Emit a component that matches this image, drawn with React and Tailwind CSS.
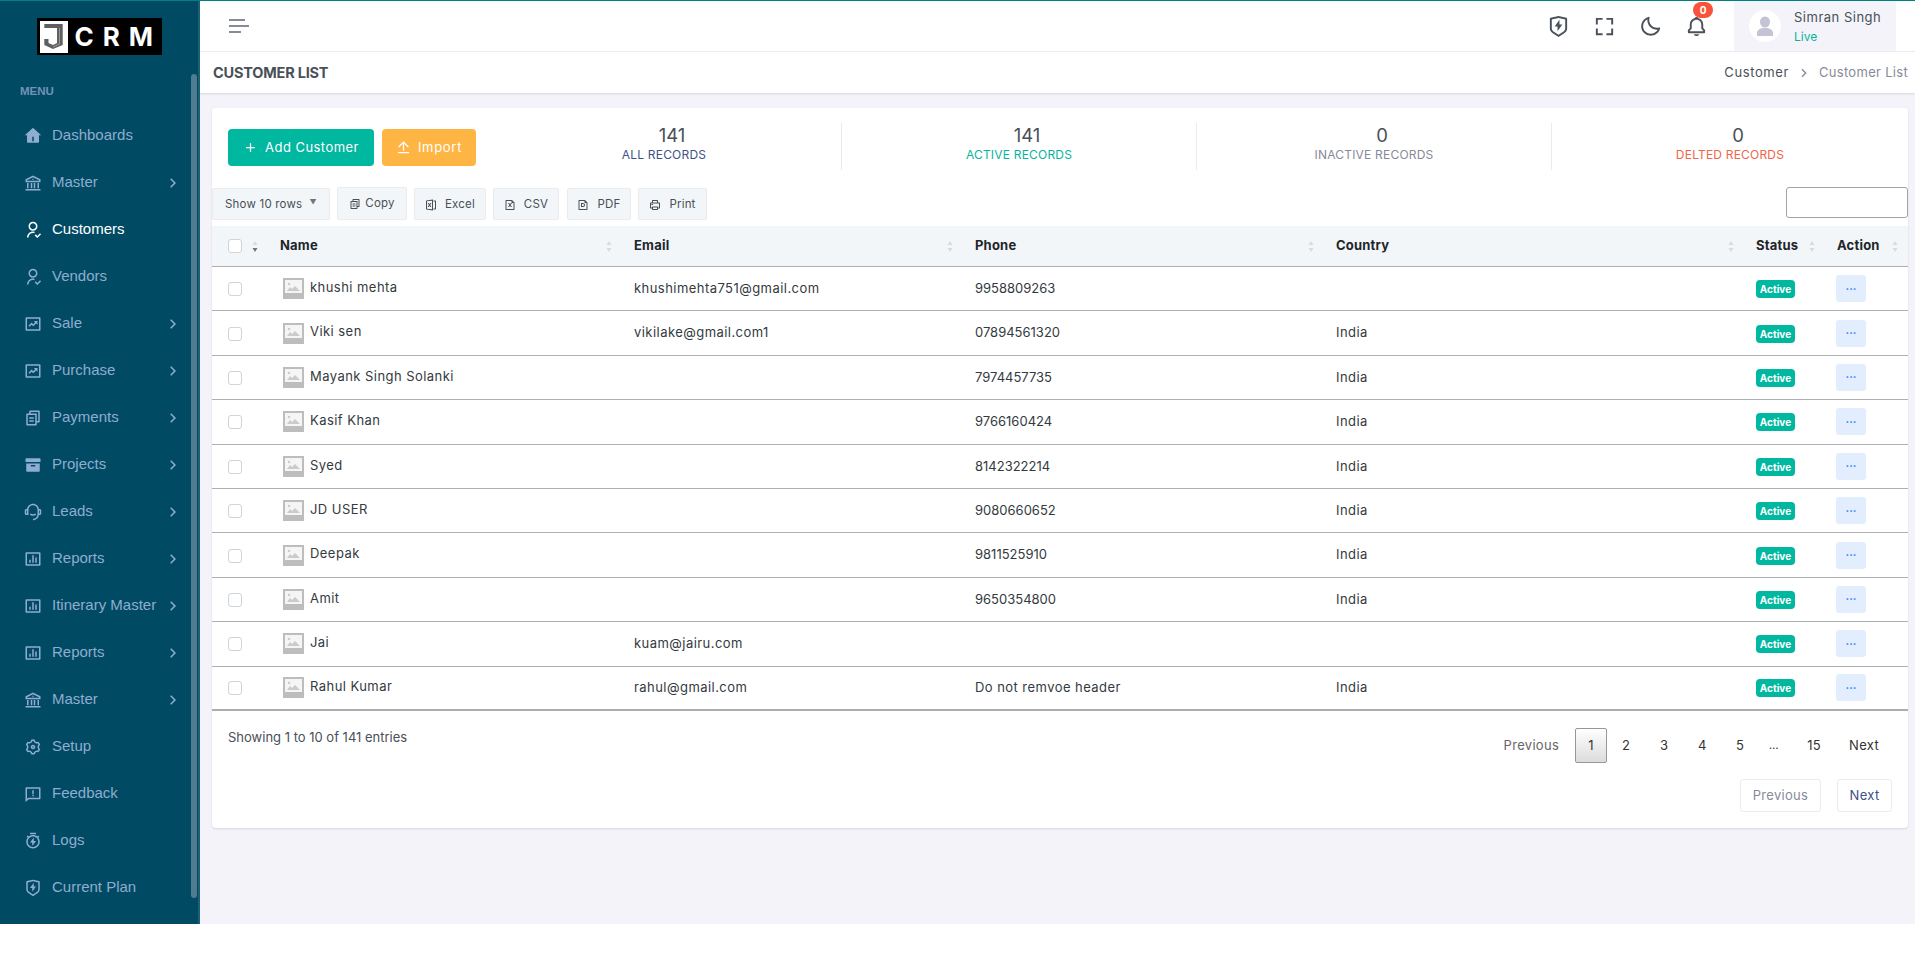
import {
  RiAddLine, RiArchiveFill, RiArrowRightSLine, RiBankLine, RiBarChartBoxLine, RiCustomerService2Line,
  RiFeedbackLine, RiFileCopy2Line, RiFileExcel2Line, RiFileExcelLine, RiFilePdfLine, RiFundsBoxLine,
  RiHome4Fill, RiPrinterLine, RiSettings3Line, RiShieldFlashLine, RiTimerFlashLine, RiUploadLine, RiUserFollowLine,
} from "react-icons/ri";
import { BiBell, BiFullscreen, BiMoon } from "react-icons/bi";

const sans = "[font-family:Inter,'Noto_Sans',sans-serif]";

const menu = [
  { label: "Dashboards", icon: RiHome4Fill },
  { label: "Master", icon: RiBankLine, more: true },
  { label: "Customers", icon: RiUserFollowLine, active: true },
  { label: "Vendors", icon: RiUserFollowLine },
  { label: "Sale", icon: RiFundsBoxLine, more: true },
  { label: "Purchase", icon: RiFundsBoxLine, more: true },
  { label: "Payments", icon: RiFileCopy2Line, more: true },
  { label: "Projects", icon: RiArchiveFill, more: true },
  { label: "Leads", icon: RiCustomerService2Line, more: true },
  { label: "Reports", icon: RiBarChartBoxLine, more: true },
  { label: "Itinerary Master", icon: RiBarChartBoxLine, more: true },
  { label: "Reports", icon: RiBarChartBoxLine, more: true },
  { label: "Master", icon: RiBankLine, more: true },
  { label: "Setup", icon: RiSettings3Line },
  { label: "Feedback", icon: RiFeedbackLine },
  { label: "Logs", icon: RiTimerFlashLine },
  { label: "Current Plan", icon: RiShieldFlashLine },
];

const rows = [
  { name: "khushi mehta", email: "khushimehta751@gmail.com", phone: "9958809263", country: "" },
  { name: "Viki sen", email: "vikilake@gmail.com1", phone: "07894561320", country: "India" },
  { name: "Mayank Singh Solanki", email: "", phone: "7974457735", country: "India" },
  { name: "Kasif Khan", email: "", phone: "9766160424", country: "India" },
  { name: "Syed", email: "", phone: "8142322214", country: "India" },
  { name: "JD USER", email: "", phone: "9080660652", country: "India" },
  { name: "Deepak", email: "", phone: "9811525910", country: "India" },
  { name: "Amit", email: "", phone: "9650354800", country: "India" },
  { name: "Jai", email: "kuam@jairu.com", phone: "", country: "" },
  { name: "Rahul Kumar", email: "rahul@gmail.com", phone: "Do not remvoe header", country: "India" },
];

const cols = "grid grid-cols-[56px_354px_341px_361px_420px_81px_83px]";

function Logo() {
  return (
    <div className="w-[125px] h-[37px] bg-black flex items-center pl-[3px]">
      <div className="w-[32px] h-[32px] bg-white flex items-center justify-center">
        <svg width="28" height="28" viewBox="0 0 28 28">
          <path d="M4.3 1H22.7V22L13 26L4.3 22V16H8.5V20L13 22L17 20V5H4.3Z" fill="#5f5f5f" />
          <path d="M19.5 5V21L13 24" fill="none" stroke="#a8a8a8" strokeWidth="0.8" />
        </svg>
      </div>
      <span className="ml-[6px] text-white text-[26px] leading-none font-bold tracking-[9px] [font-family:Inter,sans-serif]">
        CRM
      </span>
    </div>
  );
}

function Sidebar() {
  return (
    <aside className="relative w-[200px] shrink-0 bg-[#004a63] border-r-2 border-[#1c5f76] flex flex-col">
      <div className="h-[72px] pt-[17px] pl-[37px]">
        <Logo />
      </div>
      <div className="h-[39px] pl-[20px] pt-[11px] text-[11.5px] leading-[14px] font-bold text-[#7392b8] [font-family:'Liberation_Sans',Arial,sans-serif]">
        MENU
      </div>
      <nav className="flex flex-col [font-family:'Liberation_Sans',Arial,sans-serif]">
        {menu.map((item, i) => (
          <a
            key={i}
            className={`h-[47px] flex items-center pl-[24px] text-[15px] ${item.active ? "text-white" : "text-[#8fadd0]"}`}
          >
            <item.icon size={18} className="shrink-0 mr-[10px]" />
            <span className="whitespace-nowrap">{item.label}</span>
            {item.more && <RiArrowRightSLine size={18} className="absolute left-[164px]" />}
          </a>
        ))}
      </nav>
      <div className="absolute left-[191px] top-[73px] w-[6px] h-[824px] rounded bg-[#4f7c90]" />
    </aside>
  );
}

function Header() {
  return (
    <header className="h-[51px] bg-white border-b border-[#eceef1] flex items-center pl-[29px]">
      <button className="flex flex-col gap-[4px] w-[20px]">
        <span className="block h-[2px] w-[16px] bg-[#878a99]" />
        <span className="block h-[2px] w-[20px] bg-[#878a99]" />
        <span className="block h-[2px] w-[12px] bg-[#878a99]" />
      </button>
      <div className="ml-auto flex items-center text-[#495057] mr-[19px]">
        <RiShieldFlashLine size={23} className="mr-[23px]" />
        <BiFullscreen size={23} className="mr-[23px]" />
        <BiMoon size={23} className="mr-[23px]" />
        <div className="relative mr-[26px]">
          <BiBell size={23} />
          <span className="absolute -top-[13px] left-[8px] w-[20px] h-[16px] rounded-full bg-[#f8533a] text-white text-[10px] leading-[16px] text-center font-bold">
            0
          </span>
        </div>
        <div className="w-[162px] h-[50px] bg-[#f3f3f9] flex items-center pl-[15px]">
          <div className="w-[32px] h-[32px] rounded-full bg-white flex items-center justify-center">
            <svg width="18" height="20" viewBox="0 0 18 20" fill="#c3c3d5">
              <ellipse cx="9" cy="6" rx="5" ry="5.6" />
              <path d="M1 20v-3c0-3 3-5 8-5s8 2 8 5v3z" />
            </svg>
          </div>
          <div className="ml-[13px]">
            <div className="text-[13px] leading-[20px] tracking-[0.5px] text-[#495057]">Simran Singh</div>
            <div className="text-[12px] leading-[16px] mt-[2px] text-[#0ab39c]">Live</div>
          </div>
        </div>
      </div>
    </header>
  );
}

function TitleBar() {
  return (
    <div className="h-[41px] bg-white shadow-[0_1px_2px_rgba(56,65,74,0.15)] flex items-center justify-between pl-[13px] pr-[7px]">
      <h4 className="text-[14.5px] font-bold tracking-[-0.2px] text-[#495057]">CUSTOMER LIST</h4>
      <div className="flex items-center text-[13px] tracking-[0.3px]">
        <span className="text-[#495057] tracking-[0.6px]">Customer</span>
        <RiArrowRightSLine size={16} className="mx-[7px] text-[#878a99]" />
        <span className="text-[#878a99]">Customer List</span>
      </div>
    </div>
  );
}

function Stat({ value, label, color, className }) {
  return (
    <div className={`h-[47px] flex flex-col items-center ${className}`}>
      <div className="text-[18.5px] leading-[22px] mt-[1px] pl-[16px] text-[#495057]">{value}</div>
      <div className={`text-[12px] leading-[18px] tracking-[0.2px] ${color}`}>{label}</div>
    </div>
  );
}

function ToolButton({ icon: Icon, label, className, gap = "mr-[8px]" }) {
  return (
    <button className={`h-[32px] pt-[1px] bg-[#f3f6f9] border border-[#e9ebec] rounded-[2px] flex items-center justify-center text-[11.5px] tracking-[0.2px] text-[#495057] ${className}`}>
      <Icon size={12} className={gap} />
      {label}
    </button>
  );
}

function SortIcon({ className = "", sorted }) {
  return (
    <svg width="6" height="13" viewBox="0 0 6 13" className={className}>
      <path d="M3 1l2.5 4h-5z" fill="#d8dadd" />
      <path d="M3 12l2.5-4h-5z" fill={sorted ? "#70757b" : "#d8dadd"} />
    </svg>
  );
}

function Check() {
  return <span className="block w-[14px] h-[14px] bg-white border border-[#ced4da] rounded-[3px]" />;
}

function Thumb() {
  return (
    <svg width="21" height="21" viewBox="0 0 21 21" className="shrink-0">
      <rect width="21" height="21" fill="#bdbdbd" />
      <rect x="2" y="2" width="17" height="13" fill="#f5f5f5" />
      <path d="M4 13l3-4 2 2 3-3 2 2 3 3z" fill="#cbcbcb" />
      <circle cx="6" cy="6" r="1.2" fill="#cbcbcb" />
    </svg>
  );
}

function HeadCell({ label }) {
  return (
    <div className="flex items-center justify-between pl-[12px] pr-[10px]">
      <span className="font-bold text-[13px] tracking-[0.2px] text-[#212529]">{label}</span>
      <SortIcon />
    </div>
  );
}

function Table() {
  return (
    <div>
      <div className={`${cols} h-[41px] bg-[#f3f6f9] border-b border-[#adb0b3]`}>
        <div className="flex items-center pl-[16px]">
          <Check />
          <SortIcon className="ml-[10px]" sorted />
        </div>
        <HeadCell label="Name" />
        <HeadCell label="Email" />
        <HeadCell label="Phone" />
        <HeadCell label="Country" />
        <HeadCell label="Status" />
        <HeadCell label="Action" />
      </div>
      {rows.map((row, i) => (
        <div
          key={i}
          className={`${cols} h-[44.4px] items-center text-[13px] tracking-[0.45px] text-[#343a40] ${i === rows.length - 1 ? "border-b-2 border-[#adadad]" : "border-b border-[#adb0b3]"}`}
        >
          <div className="pl-[16px] pt-[1px]"><Check /></div>
          <div className="pl-[15px] flex items-center gap-[6px]">
            <Thumb />
            <span className="-mt-[2px]">{row.name}</span>
          </div>
          <div className="pl-[12px]">{row.email}</div>
          <div className={`pl-[12px] ${/^\d+$/.test(row.phone) ? "tracking-normal" : ""}`}>{row.phone}</div>
          <div className="pl-[12px]">{row.country}</div>
          <div className="pl-[12px] pt-[1px]">
            <span className="block w-[39px] h-[18px] rounded-[4px] bg-[#00b7a0] text-white text-[10px] font-bold leading-[18px] text-center tracking-normal">
              Active
            </span>
          </div>
          <div className="pl-[11px]">
            <button className="w-[30px] h-[27px] rounded-[3px] bg-[#e2eefd] text-[#2f80ff] text-[11px] leading-[20px] font-bold tracking-normal">
              ···
            </button>
          </div>
        </div>
      ))}
    </div>
  );
}

function Pagination() {
  return (
    <div className="flex items-center justify-end text-[13px] tracking-[0.3px] text-[#333] pr-[29px]">
      <span className="text-[#666] mr-[16px]">Previous</span>
      <span className="w-[32px] h-[35px] flex items-center justify-center border border-[#979797] rounded-[2px] bg-gradient-to-b from-white to-[#dcdcdc] mr-[15px]">1</span>
      {["2", "3", "4", "5"].map((n, i) => (
        <span key={n} className={`w-[8px] text-center ${i === 3 ? "mr-[25px]" : "mr-[30px]"}`}>{n}</span>
      ))}
      <span className="w-[8px] mr-[30px] text-center text-[11px]">…</span>
      <span className="w-[14px] mr-[28px] text-center">15</span>
      <span>Next</span>
    </div>
  );
}

export default function App() {
  return (
    <div className={`h-[955px] bg-white overflow-hidden ${sans}`}>
      <div className="h-[924px] flex border-t border-[#008080]">
        <Sidebar />
        <div className="flex-1 min-w-0 bg-[#f3f3f9] flex flex-col">
          <Header />
          <TitleBar />
          <main className="pt-[15px] pl-[12px] pr-[7px]">
            <div className="h-[720px] bg-white rounded-[4px] shadow-[0_1px_2px_rgba(56,65,74,0.15)]">
              <div className="flex items-start pt-[21px] h-[80px]">
                <button className="ml-[16px] w-[146px] h-[37px] bg-[#00b7a0] rounded-[4px] text-white text-[13px] tracking-[0.45px] flex items-center justify-center">
                  <RiAddLine size={15} className="mr-[7px]" />
                  Add Customer
                </button>
                <button className="ml-[8px] w-[94px] h-[37px] bg-[#ffb544] rounded-[4px] text-white text-[13px] tracking-[0.7px] flex items-center justify-center">
                  <RiUploadLine size={15} className="mr-[7px]" />
                  Import
                </button>
                <div className="flex flex-1 -mt-[6px] ml-[11px]">
                  <Stat value="141" label="ALL RECORDS" color="text-[#405189]" className="w-[355px] border-r border-[#e9ebec]" />
                  <Stat value="141" label="ACTIVE RECORDS" color="text-[#0ab39c]" className="w-[355px] border-r border-[#e9ebec]" />
                  <Stat value="0" label="INACTIVE RECORDS" color="text-[#878a99]" className="w-[355px] border-r border-[#e9ebec]" />
                  <Stat value="0" label="DELTED RECORDS" color="text-[#f06548]" className="flex-1" />
                </div>
              </div>
              <div className="h-[38px] flex items-start">
                <button className="h-[32px] pt-[1px] w-[118px] bg-[#f3f6f9] border border-[#e9ebec] rounded-[2px] flex items-center pl-[12px] text-[11.5px] tracking-[0.2px] text-[#495057]">
                  Show 10 rows
                  <span className="ml-[7px] -mt-[3px] text-[7px] text-[#70757b]">▼</span>
                </button>
                <ToolButton icon={RiFileCopy2Line} label="Copy" gap="mr-[4px]" className="ml-[7px] w-[70px] !h-[33px] -mt-[1px]" />
                <ToolButton icon={RiFileExcel2Line} label="Excel" className="ml-[7px] w-[72px]" />
                <ToolButton icon={RiFileExcelLine} label="CSV" className="ml-[7px] w-[66px]" />
                <ToolButton icon={RiFilePdfLine} label="PDF" className="ml-[8px] w-[64px]" />
                <ToolButton icon={RiPrinterLine} label="Print" className="ml-[7px] w-[69px]" />
                <input className="ml-auto -mt-[1px] w-[122px] h-[31px] bg-white border border-[#a3a3a3] rounded-[3px]" />
              </div>
              <Table />
              <div className="flex items-start">
                <div className="pl-[16px] pt-[17px] text-[13px] text-[#495057] whitespace-nowrap">
                  Showing 1 to 10 of 141 entries
                </div>
                <div className="flex-1 pt-[17px]">
                  <Pagination />
                  <div className="flex justify-end mt-[16px] pr-[16px] text-[13px] tracking-[0.3px]">
                    <span className="w-[81px] h-[33px] flex items-center justify-center border border-[#e9ebec] rounded-[3px] text-[#878a99]">Previous</span>
                    <span className="ml-[16px] w-[55px] h-[33px] flex items-center justify-center border border-[#e9ebec] rounded-[3px] text-[#405189]">Next</span>
                  </div>
                </div>
              </div>
            </div>
          </main>
        </div>
      </div>
    </div>
  );
}
